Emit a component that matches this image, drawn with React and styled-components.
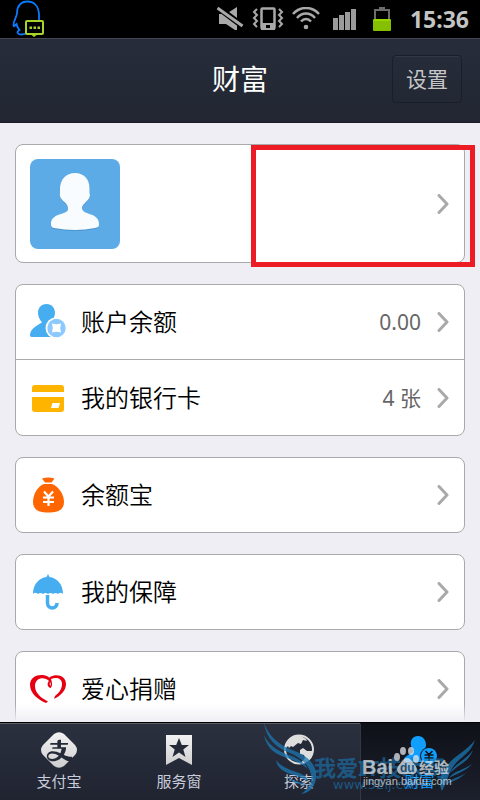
import React from "react";
import styled, { createGlobalStyle } from "styled-components";
import { AiOutlineAlipay } from "react-icons/ai";

const App = () => (
  <Screen>
    <GlobalStyle />
    <StatusBar>
      <QQIcon />
      <StatusIcons>
        <MuteIcon />
        <VibrateIcon />
        <WifiIcon />
        <SignalIcon />
        <BatteryIcon />
      </StatusIcons>
      <Time>15:36</Time>
    </StatusBar>
    <Header>
      <Title>财富</Title>
      <SettingsButton type="button">设置</SettingsButton>
    </Header>
    <Content>
      <Card>
        <ProfileRow href="#profile" aria-label="个人信息">
          <Avatar />
          <Chevron />
        </ProfileRow>
        <Highlight />
      </Card>
      <Card>
        <Item icon={<BalanceIcon />} label="账户余额" value="0.00" />
        <Item icon={<BankCardIcon />} label="我的银行卡" value="4 张" />
      </Card>
      <Card>
        <Item icon={<MoneyBagIcon />} label="余额宝" />
      </Card>
      <Card>
        <Item icon={<UmbrellaIcon />} label="我的保障" />
      </Card>
      <Card>
        <Item icon={<HeartIcon />} label="爱心捐赠" />
      </Card>
      <Fade />
    </Content>
    <TabBar>
      <Tab type="button">
        <AlipayIcon />
        支付宝
      </Tab>
      <Tab type="button">
        <ServiceIcon />
        服务窗
      </Tab>
      <Tab type="button">
        <ExploreIcon />
        探索
      </Tab>
      <Tab type="button" $active aria-current="page">
        <WealthIcon />
        财富
      </Tab>
      <Watermark />
    </TabBar>
  </Screen>
);

export default App;

const Item = ({ icon, label, value }) => (
  <Row href="#item">
    {icon}
    <Label>{label}</Label>
    {value && <Value>{value}</Value>}
    <Chevron />
  </Row>
);

const Chevron = () => (
  <svg width="12" height="20" viewBox="0 0 12 20">
    <path
      d="M2 1.5L10 10L2 18.5"
      fill="none"
      stroke="#a9a9a9"
      strokeWidth="3"
      strokeLinecap="round"
      strokeLinejoin="round"
    />
  </svg>
);

const QQIcon = () => (
  <svg width="34" height="38" viewBox="0 0 34 38">
    <path
      d="M27 20L27 14C26.500 6 22 1.500 15.500 1.500C9 1.500 5 6 5 13C5 17 1 21 1.500 25.500C2 27.500 3 25 4.500 24C5 27 6 28 7.500 30C4 32 5.500 34.500 9 34.500C11 34.500 12 34 14 33.500"
      fill="none"
      stroke="#0a7bff"
      strokeWidth="1.800"
    />
    <rect x="14" y="21" width="17" height="13" rx="1" fill="#000" stroke="#a8d429" strokeWidth="2" />
    <path d="M18.500 34L22 37L26 34" fill="#a8d429" />
    <path d="M17.500 26.500h2.500v2.500h-2.500zM21.500 26.500h2.500v2.500h-2.500zM25.500 26.500h2.500v2.500h-2.500z" fill="#a8d429" />
  </svg>
);

const MuteIcon = () => (
  <svg width="38" height="24" viewBox="0 0 38 24">
    <path d="M8 7h7L26 0v23h-2L15 17H8z" fill="#a9a9a9" />
    <path d="M5 -1L33 20" stroke="#000" strokeWidth="6" />
    <path d="M6.500 1L31.500 19" stroke="#a9a9a9" strokeWidth="3" />
  </svg>
);

const VibrateIcon = () => (
  <svg width="38" height="24" viewBox="0 0 38 24">
    <rect x="12.500" y="1.500" width="13" height="20" rx="1" fill="none" stroke="#a9a9a9" strokeWidth="2.500" />
    <path d="M12 16h14v7H12z" fill="#a9a9a9" />
    <path d="M17 18h4v3h-4z" fill="#000" />
    <path
      d="M8 2L5 5L8 8L5 11L8 14L5 17L8 20M30 2L33 5L30 8L33 11L30 14L33 17L30 20"
      fill="none"
      stroke="#a9a9a9"
      strokeWidth="2"
    />
  </svg>
);

const WifiIcon = () => (
  <svg width="38" height="24" viewBox="0 0 38 24">
    <path
      d="M6 7C13 -1 25 -1 32 7M10 11C15 5 23 5 28 11M14 14.500C17 11 21 11 24 14.500"
      fill="none"
      stroke="#a9a9a9"
      strokeWidth="2.500"
    />
    <circle cx="19" cy="20" r="2.300" fill="#a9a9a9" />
  </svg>
);

const SignalIcon = () => (
  <svg width="38" height="24" viewBox="0 0 38 24">
    <path d="M8 11h5v12H8zM14 8h5v15h-5zM20 5h5v18h-5zM26 2h5v21h-5z" fill="#9b9b9b" />
  </svg>
);

const BatteryIcon = () => (
  <svg width="38" height="24" viewBox="0 0 38 24">
    <path d="M16 0h6v2h5v10h-2V4H13v8h-2V2h5z" fill="#6c6c6c" />
    <rect x="10" y="12" width="18" height="12" rx="1" fill="#84c000" />
    <path d="M11 12h16v2H11z" fill="#96d800" />
  </svg>
);

const Avatar = () => (
  <svg width="90" height="90" viewBox="0 0 90 90">
    <rect width="90" height="90" rx="8" fill="#5dabe6" />
    <path
      d="M45 14.500C54 14.500 59.500 21 59.500 30V35C61 39 58 41.500 55 45C51 48.500 52 50 52.500 52C55 57 69 55 69 66C69 69 68 69.500 65 70C52 72.500 38 72.500 24 70C21.500 69.500 21 68.500 21 66C21 55 36 57 38 51.500C38 49 38 47.500 35.500 45C32 41.500 29 39 30 35V30C30.500 21 36 14.500 45 14.500z"
      fill="#4c94cc"
    />
    <path
      d="M45 14C54 14 59.500 20.500 59.500 29V34C61 38 58 41 55 44C51 48 52 49 52.500 51C55 56 69 54 69 65C69 68 68 68.500 65 69C52 71.500 38 71.500 24 69C21.500 68.500 21 67.500 21 65C21 54 36 56 38 51C38 48 38 47 35.500 44C32 41 29 38 30 34V29C30.500 20.500 36 14 45 14z"
      fill="#f8fcff"
    />
  </svg>
);

const BalanceIcon = () => (
  <svg width="36" height="36" viewBox="0 0 36 36">
    <path
      d="M16.500 0C22 0 25 4 25 9C25 13 22.500 15.500 21 18L25 33H2C0 33 0 32 0 30.500C1 24 7 21.500 12 18.500C10 16 8 13 8 9C8 4 11 0 16.500 0z"
      fill="#46aef0"
    />
    <circle cx="26" cy="24" r="10.500" fill="#fff" />
    <circle cx="26.500" cy="24" r="9.200" fill="#8cc9ff" />
    <path d="M22 19.500Q26.500 21 31 19.500Q29.500 24 31 28.500Q26.500 27 22 28.500Q23.500 24 22 19.500z" fill="#fff" />
  </svg>
);

const BankCardIcon = () => (
  <svg width="36" height="36" viewBox="0 0 36 36">
    <path d="M5 5h26a3 3 0 0 1 3 3v4H2V8a3 3 0 0 1 3-3zM2 17h32v12a3 3 0 0 1-3 3H5a3 3 0 0 1-3-3z" fill="#ffb400" />
    <path d="M22.500 23h7.500l-1.500 5h-7.500z" fill="#fff" />
  </svg>
);

const MoneyBagIcon = () => (
  <svg width="36" height="36" viewBox="0 0 36 36">
    <path d="M12 1.500Q18 -0.500 24.500 1.500L21.500 5.500H15z" fill="#ff6600" />
    <path d="M14 7H22C28 9 34 17 34 25C34 33 28 35.500 18 35.500C9 35.500 3 33 3 25C3 17 8 9 14 7z" fill="#ff6600" />
    <path d="M14 14.500L18.500 19.500L23 14.500M13 20.500h11M13 25h11M18.500 20v9" fill="none" stroke="#fff" strokeWidth="2.200" />
  </svg>
);

const UmbrellaIcon = () => (
  <svg width="36" height="36" viewBox="0 0 36 36">
    <path
      d="M18 0L19.500 3C27 4 33 10 33 20Q30.500 17.500 28 20Q25.500 18 23 20Q20.500 18 18 20Q15.500 18 13 20Q10.500 18 8 20Q5 17.500 3 20C3 10 9 4 16.500 3z"
      fill="#46aef0"
    />
    <path d="M17.500 21V29C17.500 35.500 27 35.500 27 29" fill="none" stroke="#46aef0" strokeWidth="3.500" />
  </svg>
);

const HeartIcon = () => (
  <svg width="36" height="36" viewBox="0 0 36 36">
    <path
      d="M21 11C19 9 18 7 20 6C27 2 36 5 36 13C36 20 30 25 24 28L25 25C29 22 32 18 32 13C32 7 26 6 21 8C22 11 23 15 20.500 17C17 16 17 12 19 10C14 5 5 7 5 15C5 22 11 27 18 30.500L16 32C8 29 0 22 0 14C0 4 12 2 18.500 6C20 7.500 21 9 21 11z"
      fill="#e60012"
    />
    <path d="M20 11Q19 13.500 20.500 15Q21.500 13 20 11" fill="#fff" />
  </svg>
);

const Silver = ({ id }) => (
  <linearGradient id={id} x2="0" y2="1">
    <stop offset="0" stopColor="#f2f2f2" />
    <stop offset="1" stopColor="#cfcfcf" />
  </linearGradient>
);

const AlipayIcon = () => (
  <svg width="36" height="36" viewBox="0 0 36 36">
    <Silver id="alipay" />
    <path
      d="M13 2Q18 -1.500 23 2L34 13Q38 18 34 23L23 34Q18 37.500 13 34L2 23Q-2 18 2 13z"
      fill="url(#alipay)"
    />
    <AiOutlineAlipay x="4" y="4" size="29" color="#252a38" />
  </svg>
);

const ServiceIcon = () => (
  <svg width="36" height="36" viewBox="0 0 36 36">
    <Silver id="service" />
    <path d="M5 3H31V33L18 26L5 33z" fill="url(#service)" />
    <path d="M18 6L20.800 13H28L22.300 17.500L24.500 25L18 20.500L11.500 25L13.700 17.500L8 13H15.200z" fill="#252a38" />
  </svg>
);

const ExploreIcon = () => (
  <svg width="36" height="36" viewBox="0 0 36 36">
    <circle cx="18" cy="17.500" r="14" fill="#252a38" stroke="#dedede" strokeWidth="2" />
    <path
      d="M5 13C8 6 14 3 20 4L25 7L26 9L22 8L20 12L17 11L12 15L10 14L8 16L7 14L4 17zM19 18L22 16L26 19H31L32 21C30 27 25 31 20 31L24 26L23 23L19 22z"
      fill="#dedede"
    />
  </svg>
);

const WealthIcon = () => (
  <svg width="36" height="36" viewBox="0 0 36 36">
    <path
      d="M16 4C21 4 24 8 24 13C24 17 21 18 20 21L23 30H2C1 24 7 23 11 20C12 18 9 17 9 13C8 8 11 4 16 4z"
      fill="#109eff"
    />
    <circle cx="27" cy="24" r="9" fill="#11141c" />
    <circle cx="27" cy="24" r="8" fill="#109eff" />
    <path d="M23.500 19L27 22.500L30.500 19M22.500 23h9M22.500 26h9M27 22v7" fill="none" stroke="#11141c" strokeWidth="1.600" />
  </svg>
);

const Watermark = () => (
  <Overlay viewBox="0 0 220 78" aria-hidden="true">
    <g fill="#1b78b4" opacity="0.75">
      <path d="M4 1C9 15 20 23 32 28C47 33 58 43 56 57C54 67 48 71 41 72C49 66 53 60 51 52C48 41 39 35 30 31C16 26 6 16 4 1z" />
      <path d="M4 13C9 24 18 29 29 33C38 36 45 41 48 47C41 41 33 38 24 35C13 31 6 24 4 13z" />
      <path d="M16 38C22 46 31 48 39 51C45 53 48 56 49 60C43 56 37 54 30 52C22 49 17 45 16 38z" />
      <path d="M26 54C32 59 40 60 48 63C40 63 31 61 26 54z" />
      <path d="M215 18C211 30 203 34 197 40C189 48 188 58 182 69C177 60 183 47 191 39C198 32 207 28 215 18z" />
      <path d="M213 28C209 38 203 41 197 45L190 51C194 42 206 38 213 28z" />
      <path d="M212 42C206 49 198 51 189 56C193 49 204 48 212 42z" />
      <path d="M206 51C200 57 193 59 185 63C189 57 198 56 206 51z" />
    </g>
    <g fill="#1b78b4" opacity="0.6">
      <SiteName x="54" y="54">
        我爱IT技术网
      </SiteName>
      <SiteUrl x="73" y="67">
        www.52ij.com
      </SiteUrl>
    </g>
    <g fill="#e2e5ea" opacity="0.75">
      <BaiduName x="102" y="52">
        Bai
      </BaiduName>
      <ellipse cx="137" cy="35" rx="3" ry="4" />
      <ellipse cx="143" cy="29" rx="3" ry="4" />
      <ellipse cx="151" cy="29" rx="3" ry="4" />
      <ellipse cx="156" cy="37" rx="3" ry="4" />
      <path d="M147 36C151 36 152 40 155 43C159 48 156 53 151 52H143C138 53 135 48 139 43C142 40 143 36 147 36z" />
      <PawText x="140" y="50">
        du
      </PawText>
      <BaiduSuffix x="159" y="51">
        经验
      </BaiduSuffix>
      <BaiduUrl x="103" y="63">
        jingyan.baidu.com
      </BaiduUrl>
    </g>
  </Overlay>
);

const GlobalStyle = createGlobalStyle`
  body {
    margin: 0;
    background: #efeef4;
    font-family: "Noto Sans", "Noto Sans CJK SC", sans-serif;
  }

  * {
    box-sizing: border-box;
  }

  svg {
    display: block;
    flex-shrink: 0;
  }
`;

const Screen = styled.div`
  height: 100vh;
  display: flex;
  flex-direction: column;
  overflow: hidden;
`;

const StatusBar = styled.div`
  height: 38px;
  flex-shrink: 0;
  display: flex;
  align-items: center;
  padding: 0 11px 0 12px;
  background: #000;
`;

const StatusIcons = styled.div`
  display: flex;
  margin-left: auto;
`;

const Time = styled.time`
  margin-left: 9px;
  color: #c4c4c4;
  font-size: 23px;
  font-weight: 700;
  line-height: 38px;
`;

const Header = styled.header`
  height: 85px;
  flex-shrink: 0;
  display: grid;
  grid-template-columns: 1fr auto 1fr;
  align-items: center;
  padding: 0 18px 4px;
  background: linear-gradient(#272d3a, #222633);
  border-top: 1px solid #454553;
  border-bottom: 1px solid #1d1c2b;
`;

const Title = styled.h1`
  grid-column: 2;
  margin: 0;
  color: #fff;
  font-size: 28px;
  font-weight: 400;
  line-height: 40px;
`;

const SettingsButton = styled.button`
  justify-self: end;
  width: 70px;
  height: 48px;
  padding: 0 0 2px;
  background: transparent;
  border: 1px solid #1c1d2a;
  border-radius: 4px;
  box-shadow: inset 0 1px #353744;
  color: #c6c6c8;
  font-family: inherit;
  font-size: 21px;
`;

const Content = styled.main`
  position: relative;
  flex: 1;
  min-height: 0;
  display: flex;
  flex-direction: column;
  gap: 21px;
  padding: 21px 15px 0;
  overflow: hidden;
`;

const Card = styled.section`
  position: relative;
  flex-shrink: 0;
  background: #fff;
  border: 1px solid #a9a9ab;
  border-radius: 8px;
`;

const Row = styled.a`
  min-height: 74px;
  display: flex;
  align-items: center;
  padding: 0 15px 0 14px;
  color: #000;
  text-decoration: none;

  & + & {
    min-height: 76px;
    border-top: 1px solid #a9a9ab;
  }
`;

const ProfileRow = styled(Row)`
  min-height: 117px;
  justify-content: space-between;
`;

const Label = styled.span`
  flex: 1;
  margin-left: 15px;
  font-size: 24px;
  font-weight: 350;
  line-height: 36px;
`;

const Value = styled.span`
  margin-right: 16px;
  color: #666;
  font-size: 21px;
  line-height: 36px;
`;

const Highlight = styled.div`
  position: absolute;
  top: 0;
  right: -11px;
  bottom: -5px;
  width: 50%;
  border: 5px solid #ed1c24;
  pointer-events: none;
`;

const Fade = styled.div`
  position: absolute;
  right: 0;
  bottom: 0;
  left: 0;
  height: 18px;
  background: linear-gradient(rgba(239, 238, 244, 0), #efeef4);
`;

const TabBar = styled.nav`
  position: relative;
  height: 78px;
  flex-shrink: 0;
  display: grid;
  grid-template-columns: repeat(4, 1fr);
  background: #232734;
  border-top: 1px solid #000;
`;

const Tab = styled.button`
  display: flex;
  flex-direction: column;
  align-items: center;
  padding: 8px 2px 0 0;
  background: ${({ $active }) =>
    $active ? "linear-gradient(#0f1118, #1c202c)" : "linear-gradient(#2b303f, #202431)"};
  border: 0;
  border-top: 1px solid ${({ $active }) => ($active ? "#0f1118" : "#5c5e68")};
  border-left: ${({ $active }) => ($active ? "1px solid #343844" : "0")};
  color: ${({ $active }) => ($active ? "#109eff" : "#c9ccda")};
  font-family: inherit;
  font-size: 15px;
  line-height: 26px;
`;

const Overlay = styled.svg`
  position: absolute;
  right: 0;
  bottom: 0;
  width: 220px;
  height: 78px;
  pointer-events: none;
`;

const SiteName = styled.text`
  font-size: 22px;
  font-weight: 700;
`;

const SiteUrl = styled.text`
  font-family: "DejaVu Sans", sans-serif;
  font-size: 13px;
`;

const BaiduName = styled.text`
  font-family: "Liberation Sans", sans-serif;
  font-size: 20px;
  font-weight: 700;
`;

const PawText = styled.text`
  fill: #1d5f8c;
  font-family: "Liberation Sans", sans-serif;
  font-size: 12px;
  font-weight: 700;
`;

const BaiduSuffix = styled.text`
  font-size: 15px;
  font-weight: 700;
`;

const BaiduUrl = styled.text`
  font-family: "Liberation Sans", sans-serif;
  font-size: 11px;
`;
